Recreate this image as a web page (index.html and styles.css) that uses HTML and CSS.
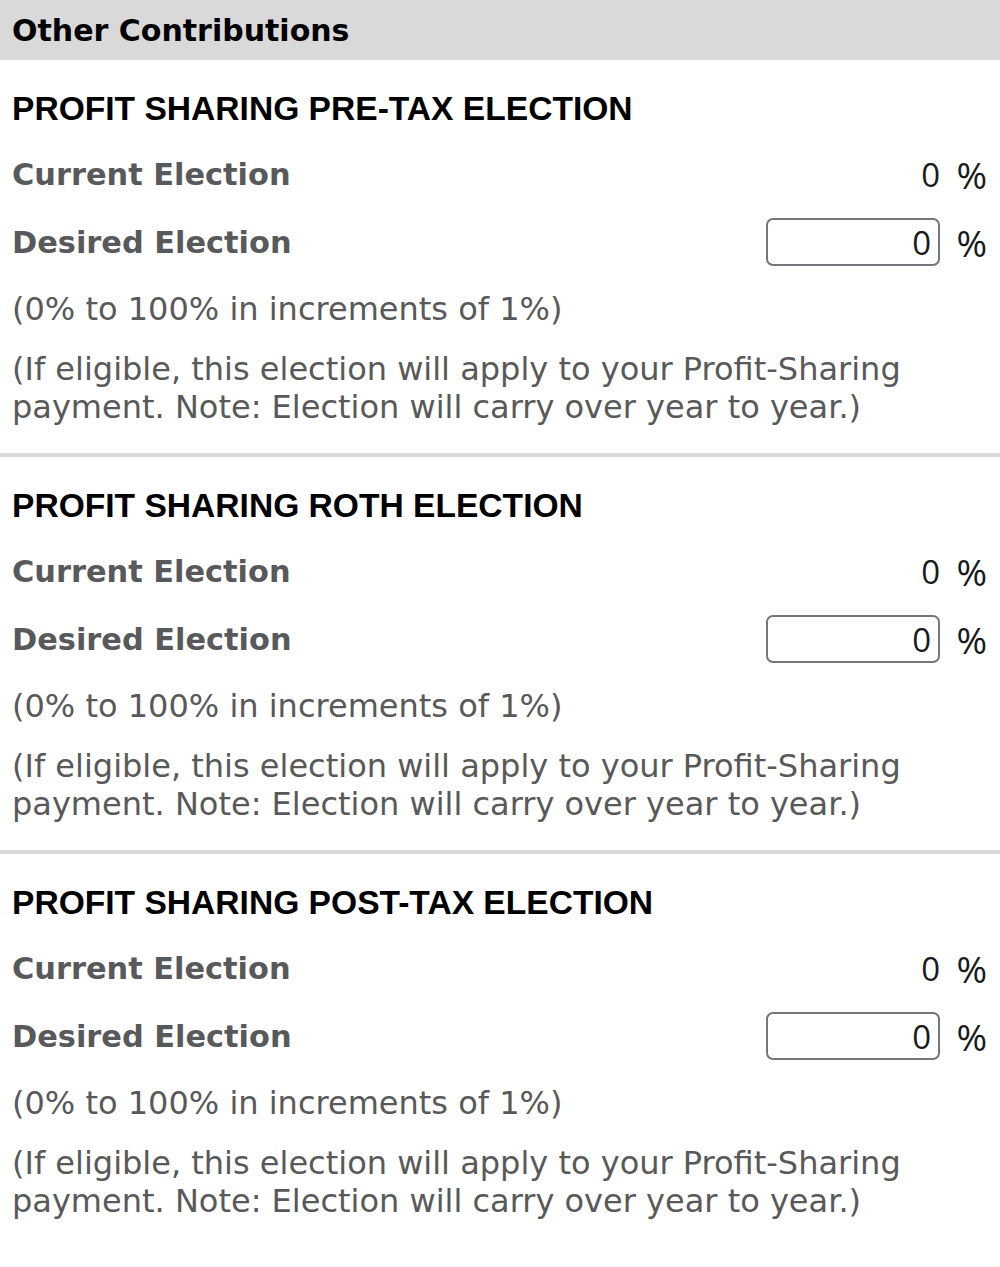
FILE: index.html
```html
<!DOCTYPE html>
<html lang="en">
<head>
    <meta charset="UTF-8">
    <meta name="viewport" content="width=device-width, initial-scale=1.0">
    <title>Other Contributions</title>
    <link rel="stylesheet" href="styles.css">
</head>
<body>
    <div class="panel-header">Other Contributions</div>

    <div class="election">
        <h3 class="election-title">PROFIT SHARING PRE-TAX ELECTION</h3>
        <div class="row">
            <span class="label">Current Election</span>
            <span class="value"><span class="num">0</span><span class="pct">%</span></span>
        </div>
        <div class="row">
            <label class="label" for="pretax">Desired Election</label>
            <span class="value"><input type="text" id="pretax" class="pct-input" value="0"><span class="pct">%</span></span>
        </div>
        <p class="hint">(0% to 100% in increments of 1%)</p>
        <p class="note">(If eligible, this election will apply to your Profit-Sharing payment. Note: Election will carry over year to year.)</p>
    </div>

    <div class="election">
        <h3 class="election-title">PROFIT SHARING ROTH ELECTION</h3>
        <div class="row">
            <span class="label">Current Election</span>
            <span class="value"><span class="num">0</span><span class="pct">%</span></span>
        </div>
        <div class="row">
            <label class="label" for="roth">Desired Election</label>
            <span class="value"><input type="text" id="roth" class="pct-input" value="0"><span class="pct">%</span></span>
        </div>
        <p class="hint">(0% to 100% in increments of 1%)</p>
        <p class="note">(If eligible, this election will apply to your Profit-Sharing payment. Note: Election will carry over year to year.)</p>
    </div>

    <div class="election last">
        <h3 class="election-title">PROFIT SHARING POST-TAX ELECTION</h3>
        <div class="row">
            <span class="label">Current Election</span>
            <span class="value"><span class="num">0</span><span class="pct">%</span></span>
        </div>
        <div class="row">
            <label class="label" for="posttax">Desired Election</label>
            <span class="value"><input type="text" id="posttax" class="pct-input" value="0"><span class="pct">%</span></span>
        </div>
        <p class="hint">(0% to 100% in increments of 1%)</p>
        <p class="note">(If eligible, this election will apply to your Profit-Sharing payment. Note: Election will carry over year to year.)</p>
    </div>
</body>
</html>
```

FILE: styles.css
```css
body {
    margin: 0;
    font-family: "DejaVu Sans", Verdana, sans-serif;
    background: #fff;
    color: #222;
}
.panel-header {
    background: #d9d9d9;
    height: 60px;
    line-height: 62px;
    padding-left: 12px;
    font-size: 30px;
    font-weight: bold;
    color: #000;
}
.election {
    padding: 30px 13px 27px 12px;
    border-bottom: 4px solid #d9d9d9;
}
.election.last {
    border-bottom: none;
}
.election-title {
    margin: 0 0 12px;
    font-family: "Liberation Sans", Arial, sans-serif;
    font-size: 33.6px;
    font-weight: bold;
    color: #000;
    line-height: 38px;
}
.row {
    display: flex;
    justify-content: space-between;
    align-items: center;
    height: 68px;
}
.label {
    font-size: 30.4px;
    font-weight: bold;
    color: #58595b;
}
.value {
    display: flex;
    align-items: center;
    gap: 14px;
    font-family: "Open Sans", sans-serif;
    font-size: 33px;
    color: #1a1a1a;
}
.pct {
    width: 33px;
    text-align: right;
    font-size: 37px;
    line-height: 1;
}
.pct-input {
    width: 174px;
    height: 48px;
    box-sizing: border-box;
    border: 2px solid #75757c;
    border-radius: 7px;
    padding: 0 7px 0 4px;
    text-align: right;
    font-family: "Open Sans", sans-serif;
    font-size: 33px;
    color: #1a1a1a;
}
.hint, .note {
    margin: 0;
    font-size: 32px;
    color: #595959;
    line-height: 38px;
}
.hint {
    margin-top: 14px;
}
.note {
    margin-top: 22px;
}
```
